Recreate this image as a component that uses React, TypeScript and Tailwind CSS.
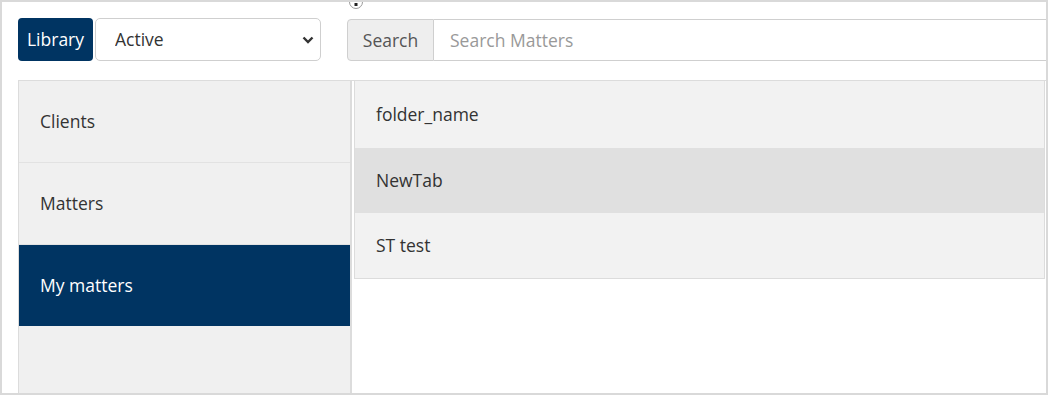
import { useState } from "react";

const sections = ["Clients", "Matters", "My matters"];
const folders = ["folder_name", "NewTab", "ST test"];

export default function App() {
  const [section, setSection] = useState("My matters");
  const [hovered, setHovered] = useState("NewTab");
  const [query, setQuery] = useState("");

  return (
    <div className="relative w-[1048px] h-[395px] overflow-hidden bg-white border-2 border-[#d9d9d9] font-['Open_Sans',sans-serif] text-[17.5px] text-[#333]">
      {/* resize handle peeking from the top edge */}
      <svg
        className="absolute left-[346px] top-[-8px]"
        width="16"
        height="16"
        viewBox="0 0 16 16"
      >
        <circle cx="8" cy="8" r="6.5" fill="white" stroke="#9a9a9a" strokeWidth="1" />
        <rect x="6.5" y="9" width="3" height="3" fill="#222" />
      </svg>

      <div className="flex items-start pl-4 pt-4">
        <div className="w-[75px] h-[43px] flex items-center justify-center rounded-[4px] bg-[#003462] text-white">
          Library
        </div>
        <div className="relative ml-[2px] w-[226px] h-[43px]">
          <select className="w-full h-full appearance-none rounded-[5px] border border-[#cfcfcf] bg-white pl-[19px] text-[#333] outline-none">
            <option>Active</option>
            <option>Archived</option>
            <option>All</option>
          </select>
          <svg
            className="absolute right-[7px] top-[18px] pointer-events-none"
            width="12"
            height="8"
            viewBox="0 0 12 8"
          >
            <path d="M1.5 1.5 L6 6 L10.5 1.5" fill="none" stroke="#333" strokeWidth="2.4" />
          </svg>
        </div>
        <div className="ml-[26px] flex flex-1 h-[42px] mt-px">
          <div className="w-[87px] flex items-center justify-center rounded-l-[4px] border border-[#cfcfcf] bg-[#eeeeee] text-[#555]">
            Search
          </div>
          <input
            value={query}
            onChange={(e) => setQuery(e.target.value)}
            placeholder="Search Matters"
            className="flex-1 border-y border-[#cfcfcf] bg-white pl-4 text-[#333] placeholder:text-[#999] outline-none"
          />
        </div>
      </div>

      <div className="ml-4 mt-[19px] flex h-[320px] border-t border-[#dcdcdc]">
        <div className="w-[334px] shrink-0 border-l border-r-2 border-[#dcdcdc] bg-[#f0f0f0]">
          {sections.map((s) => (
            <div
              key={s}
              onClick={() => setSection(s)}
              className={
                section === s
                  ? "h-[81px] flex items-center pl-[21px] bg-[#003462] text-white cursor-pointer"
                  : "h-[82px] flex items-center pl-[21px] border-b border-[#e2e2e2] cursor-pointer"
              }
            >
              {s}
            </div>
          ))}
        </div>
        <div className="flex-1 pl-[2px] pr-px">
          <div className="border-l border-r border-b border-[#dcdcdc]">
            {folders.map((f, i) => (
              <div
                key={f}
                onMouseEnter={() => setHovered(f)}
                className={
                  (i === 0 ? "h-[67px] " : "h-[65px] ") +
                  (hovered === f ? "bg-[#e0e0e0]" : "bg-[#f2f2f2]") +
                  " flex items-center pl-[21px] cursor-pointer"
                }
              >
                {f}
              </div>
            ))}
          </div>
        </div>
      </div>
    </div>
  );
}
